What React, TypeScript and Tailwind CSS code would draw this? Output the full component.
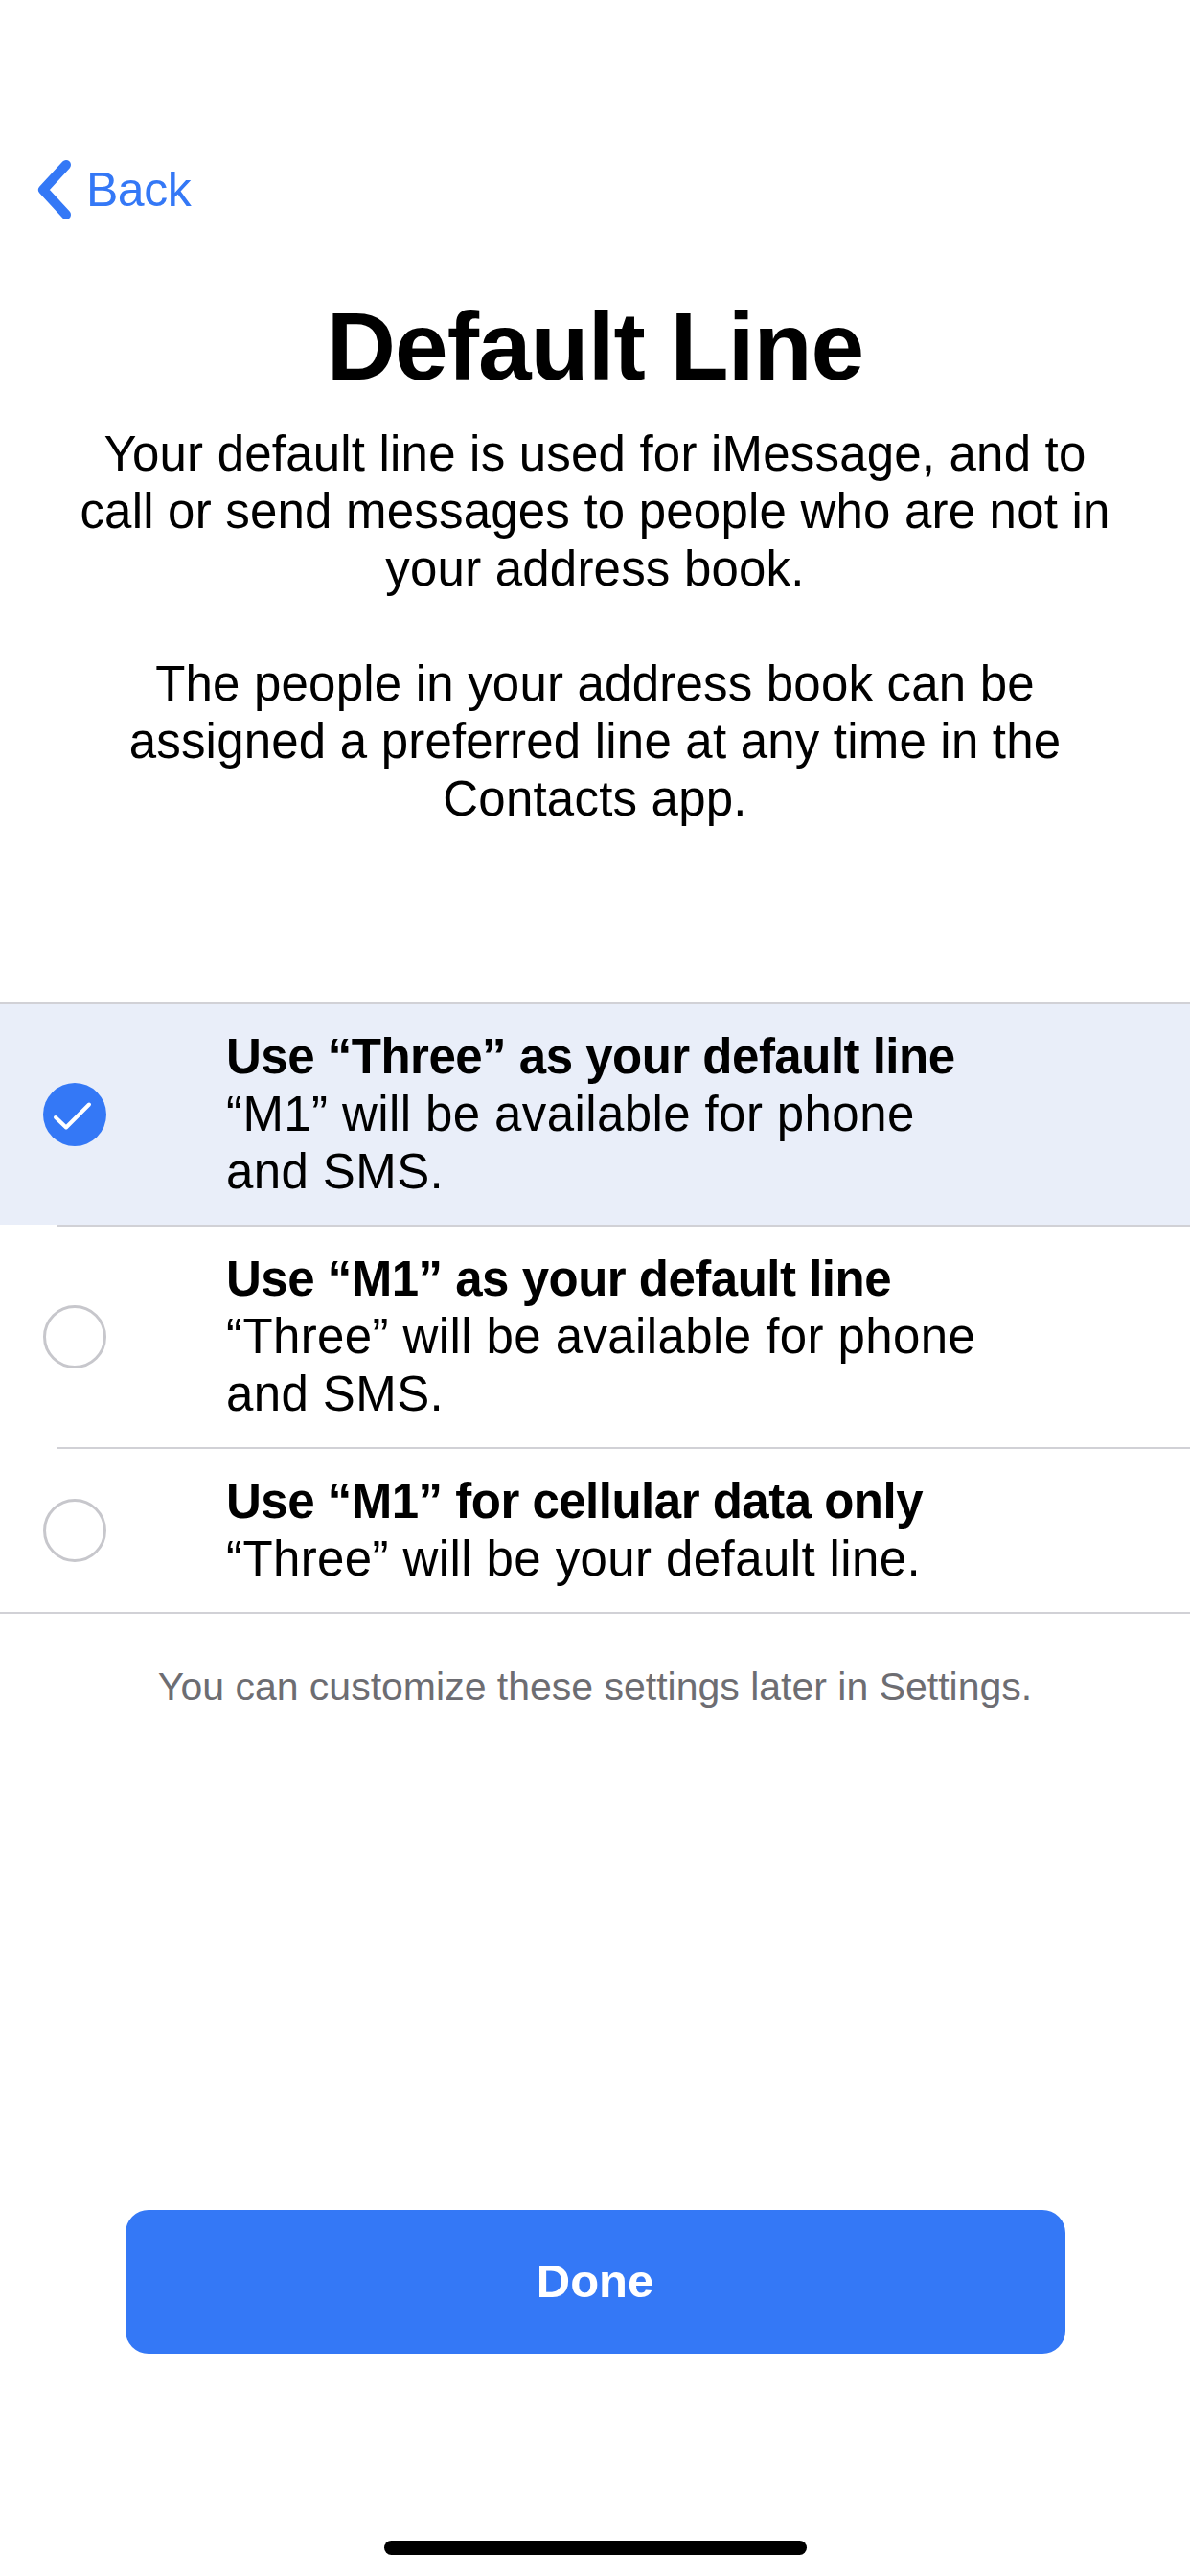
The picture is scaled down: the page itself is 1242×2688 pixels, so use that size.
const font = { fontFamily: '"Liberation Sans", Arial, sans-serif' };

interface LineOption {
  title: string;
  lines: string[];
  selected?: boolean;
}

const options: LineOption[] = [
  {
    title: "Use \u201CThree\u201D as your default line",
    lines: ["\u201CM1\u201D will be available for phone", "and SMS."],
    selected: true,
  },
  {
    title: "Use \u201CM1\u201D as your default line",
    lines: ["\u201CThree\u201D will be available for phone", "and SMS."],
  },
  {
    title: "Use \u201CM1\u201D for cellular data only",
    lines: ["\u201CThree\u201D will be your default line."],
  },
];

const Radio = ({ selected }: { selected?: boolean }) =>
  selected ? (
    <div className="w-[66px] h-[66px] rounded-full bg-[#3478f6] flex items-center justify-center shrink-0">
      <svg width="66" height="66" viewBox="0 0 66 66" fill="none">
        <path d="M13 36 L24 46.5 L48 22.5" stroke="white" strokeWidth={4} strokeLinecap="round" strokeLinejoin="round" />
      </svg>
    </div>
  ) : (
    <div className="w-[66px] h-[66px] rounded-full border-[3px] border-[#c7c7cc] shrink-0" />
  );

export default function App() {
  return (
    <div className="w-[1242px] h-[2688px] bg-white flex flex-col text-black overflow-hidden" style={font}>
      {/* nav */}
      <div className="mt-[167px] h-[62px] pl-[39px] flex items-center text-[#3478f6]">
        <svg width="35" height="62" viewBox="0 0 35 62" fill="none">
          <path d="M30 5 L6 31 L30 57" stroke="#3478f6" strokeWidth={10} strokeLinecap="round" strokeLinejoin="round" />
        </svg>
        <span className="ml-[16px] text-[50px] leading-[62px] tracking-[-0.5px]">Back</span>
      </div>

      <h1 className="mt-[72px] text-center text-[100px] leading-[120px] font-bold tracking-[-1px]">Default Line</h1>

      <div className="mt-[23px] text-center text-[51px] leading-[60px] tracking-[0.2px] whitespace-nowrap">
        <p>Your default line is used for iMessage, and to</p>
        <p>call or send messages to people who are not in</p>
        <p>your address book.</p>
        <p className="mt-[60px]">The people in your address book can be</p>
        <p>assigned a preferred line at any time in the</p>
        <p>Contacts app.</p>
      </div>

      {/* options */}
      <div className="mt-[182px] border-t-2 border-b-2 border-[#d1d1d6]">
        {options.map((opt, i) => (
          <div key={i} className={i > 0 ? "pl-[60px]" : ""}>
            <div
              className={
                "flex items-center " +
                (opt.selected ? "bg-[#e9eef9] " : "") +
                (i > 0 ? "border-t-2 border-[#d1d1d6]" : "")
              }
            >
              <div className={"flex items-center w-full py-[25px] pl-[45px] " + (i > 0 ? "-ml-[60px]" : "")}>
                <Radio selected={opt.selected} />
                <div className="ml-[125px] text-[51px] leading-[60px] whitespace-nowrap">
                  <div className="font-bold tracking-[-0.5px]">{opt.title}</div>
                  {opt.lines.map((l, j) => (
                    <div key={j} className="tracking-[0.4px]">{l}</div>
                  ))}
                </div>
              </div>
            </div>
          </div>
        ))}
      </div>

      <p className="mt-[53px] text-center text-[41px] leading-[47px] text-[#6d6d72]">
        You can customize these settings later in Settings.
      </p>

      <button className="mt-[522px] mx-auto w-[981px] h-[150px] rounded-[24px] bg-[#3478f6] text-white text-[49px] font-bold flex items-center justify-center">
        Done
      </button>

      <div className="mt-[195px] mx-auto w-[441px] h-[15px] rounded-full bg-black" />
    </div>
  );
}
